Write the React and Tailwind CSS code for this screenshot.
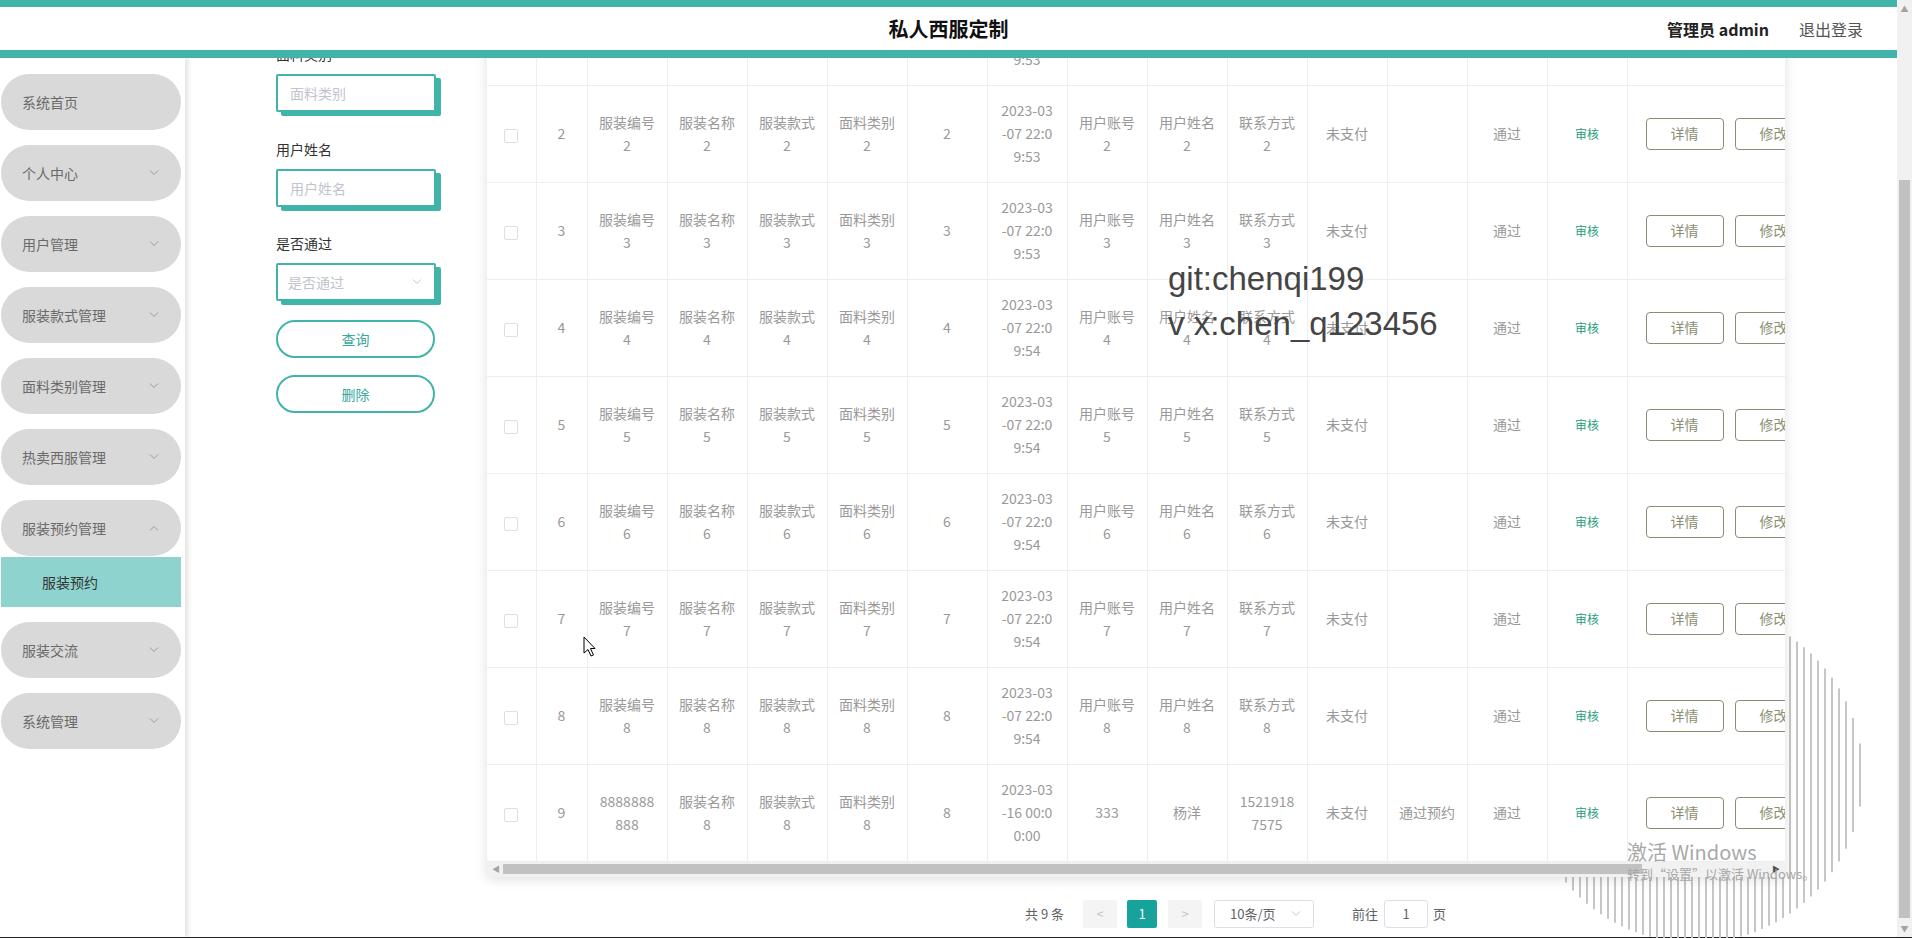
import React from "react";

const menu = [
  { label: "系统首页" },
  { label: "个人中心", arrow: "down" },
  { label: "用户管理", arrow: "down" },
  { label: "服装款式管理", arrow: "down" },
  { label: "面料类别管理", arrow: "down" },
  { label: "热卖西服管理", arrow: "down" },
  { label: "服装预约管理", arrow: "up", sub: "服装预约" },
  { label: "服装交流", arrow: "down" },
  { label: "系统管理", arrow: "down" },
];

const widths = ["w-[49px]", "w-[51px]", "w-[80px]", "w-[80px]", "w-[80px]", "w-[80px]", "w-[80px]", "w-[80px]", "w-[80px]", "w-[80px]", "w-[80px]", "w-[80px]", "w-[80px]", "w-[80px]", "w-[80px]", "w-[200px]"];

const rows = [];
for (let n = 1; n <= 8; n++) {
  rows.push({
    idx: String(n),
    text: [
      ["服装编号", String(n)],
      ["服装名称", String(n)],
      ["服装款式", String(n)],
      ["面料类别", String(n)],
      [String(n)],
      ["2023-03", "-07 22:0", n <= 3 ? "9:53" : "9:54"],
      ["用户账号", String(n)],
      ["用户姓名", String(n)],
      ["联系方式", String(n)],
      ["未支付"],
      [],
      ["通过"],
    ],
  });
}
rows.push({
  idx: "9",
  text: [
    ["8888888", "888"],
    ["服装名称", "8"],
    ["服装款式", "8"],
    ["面料类别", "8"],
    ["8"],
    ["2023-03", "-16 00:0", "0:00"],
    ["333"],
    ["杨洋"],
    ["1521918", "7575"],
    ["未支付"],
    ["通过预约"],
    ["通过"],
  ],
});

function Chevron({ up, color = "#9a9a9a" }) {
  return (
    <svg width="10" height="6" viewBox="0 0 10 6">
      <polyline points={up ? "1,5.5 5,1.5 9,5.5" : "1,0.5 5,4.5 9,0.5"} fill="none" stroke={color} strokeWidth="1" />
    </svg>
  );
}

function Field({ label }) {
  return (
    <input
      readOnly
      placeholder={label}
      className="mt-[10px] h-[38px] w-[160px] rounded-[2px] border-2 border-[#41b4a9] bg-white pl-[12px] text-[14px] shadow-[5px_4px_0_#41b4a9] outline-none placeholder:text-[#c0c4cc]"
    />
  );
}

function Decoration() {
  const lines = [];
  const r = 168;
  for (let x = 4; x < 2 * r; x += 7) {
    const dx = x - r;
    const h = Math.sqrt(r * r - dx * dx);
    lines.push(<line key={x} x1={x} x2={x} y1={r - h} y2={r + h} stroke="#c6c6c6" strokeWidth="2" />);
  }
  return (
    <svg width="336" height="336" viewBox="0 0 336 336" className="absolute left-[1527px] top-[607px] z-0">
      {lines}
    </svg>
  );
}

export default function App() {
  return (
    <div className="relative isolate flex h-[938px] w-[1912px] flex-col overflow-hidden bg-white font-['Noto_Sans_CJK_SC','Noto_Sans',sans-serif]">
      <div className="flex h-[937px]">
        <div className="flex w-[1897px] flex-col">
          {/* top bar */}
          <header className="relative z-30 grid h-[58px] grid-cols-[1fr_auto_1fr] items-center border-t-[7px] border-b-[8px] border-[#41b4a9] bg-white">
            <div />
            <div className="text-[20px] font-bold text-[#111]">私人西服定制</div>
            <div className="flex items-center justify-end gap-[30px] pr-[34px] text-[16px]">
              <span className="font-bold text-[#222]">管理员 admin</span>
              <span className="text-[#555]">退出登录</span>
            </div>
          </header>

          <div className="flex h-[879px] overflow-hidden">
            {/* sidebar */}
            <aside className="relative z-20 flex w-[185px] shrink-0 flex-col gap-[15px] bg-white pt-[16px] shadow-[3px_0_5px_rgba(0,0,0,0.12)]">
              {menu.map((m) => (
                <div key={m.label} className="flex flex-col">
                  <div className="ml-px flex h-[56px] w-[180px] items-center justify-between rounded-full bg-[#d9d9d9] pl-[21px] pr-[22px] text-[14px] text-[#6a6a6a]">
                    <span>{m.label}</span>
                    {m.arrow && <Chevron up={m.arrow === "up"} />}
                  </div>
                  {m.sub && (
                    <div className="ml-px mt-px flex h-[50px] w-[180px] items-center bg-[#8fd3ce] pl-[41px] text-[14px] text-[#333]">
                      {m.sub}
                    </div>
                  )}
                </div>
              ))}
            </aside>

            {/* main */}
            <main className="flex flex-1">
              {/* search form */}
              <div className="ml-[91px] mt-[-14px] flex w-[165px] shrink-0 flex-col text-[14px]">
                <div className="h-[20px] leading-[20px] text-[#333]">面料类别</div>
                <Field label="面料类别" />
                <div className="mt-[27px] h-[20px] leading-[20px] text-[#333]">用户姓名</div>
                <Field label="用户姓名" />
                <div className="mt-[26px] h-[20px] leading-[20px] text-[#333]">是否通过</div>
                <div className="mt-[10px] flex h-[38px] w-[160px] items-center justify-between rounded-[2px] border-2 border-[#41b4a9] bg-white pl-[10px] pr-[12px] text-[#c0c4cc] shadow-[5px_4px_0_#41b4a9]">
                  <span>是否通过</span>
                  <Chevron color="#c0c4cc" />
                </div>
                <button type="button" className="mt-[19px] h-[38px] w-[159px] rounded-full border-2 border-[#41b4a9] bg-white text-[14px] text-[#36a89c]">查询</button>
                <button type="button" className="mt-[17px] h-[38px] w-[159px] rounded-full border-2 border-[#41b4a9] bg-white text-[14px] text-[#36a89c]">删除</button>
              </div>

              {/* table + pager */}
              <div className="ml-[46px] mt-[-70px] flex flex-col">
                <div className="relative z-10 w-[1298px] overflow-hidden bg-white shadow-[0_2px_12px_0_rgba(0,0,0,0.13)]">
                  <table className="w-[1340px] table-fixed border-collapse">
                    <colgroup>
                      {widths.map((w, i) => (
                        <col key={i} className={w} />
                      ))}
                    </colgroup>
                    <tbody>
                      {rows.map((r) => (
                        <tr key={r.idx} className="h-[97px]">
                          <td className="border-r border-b border-[#ebeef5] text-center align-middle">
                            <span className="inline-block h-[14px] w-[14px] rounded-[2px] border border-[#dcdfe6] bg-white align-middle" />
                          </td>
                          <td className="border-r border-b border-[#ebeef5] text-center align-middle text-[14px] text-[#999]">{r.idx}</td>
                          {r.text.map((lines, i) => (
                            <td key={i} className="border-r border-b border-[#ebeef5] px-[8px] text-center align-middle text-[14px] leading-[23px] text-[#999]">
                              {lines.map((l, j) => (
                                <div key={j} className="whitespace-nowrap">{l}</div>
                              ))}
                            </td>
                          ))}
                          <td className="border-r border-b border-[#ebeef5] text-center align-middle text-[12px] text-[#2a9d7c]">审核</td>
                          <td className="border-b border-[#ebeef5] pl-[18px] align-middle">
                            <div className="flex gap-[11px]">
                              <span className="flex h-[32px] w-[78px] items-center justify-center rounded-[4px] border border-[#8c8c74] text-[14px] text-[#8a8f74]">详情</span>
                              <span className="flex h-[32px] w-[78px] items-center justify-center rounded-[4px] border border-[#8c8c74] text-[14px] text-[#8a8f74]">修改</span>
                            </div>
                          </td>
                        </tr>
                      ))}
                    </tbody>
                  </table>
                  {/* horizontal scrollbar */}
                  <div className="flex h-[15px] items-center bg-[#f1f1f1]">
                    <span className="ml-[5px] w-[8px] text-[8px] leading-none text-[#a3a3a3]">◀</span>
                    <div className="ml-[3px] h-[10px] w-[1139px] bg-[#c1c1c1]" />
                    <span className="ml-auto mr-[5px] text-[8px] leading-none text-[#505050]">▶</span>
                  </div>
                </div>

                {/* pagination */}
                <div className="ml-[538px] mt-[23px] flex h-[28px] items-center text-[13px] text-[#606266]">
                  <span className="w-[58px] whitespace-nowrap">共 9 条</span>
                  <span className="mr-[10px] flex h-[28px] w-[34px] items-center justify-center rounded-[2px] bg-[#f4f4f5] text-[#c0c4cc]">&lt;</span>
                  <span className="mr-[11px] flex h-[28px] w-[30px] items-center justify-center rounded-[2px] bg-[#17a39c] text-white">1</span>
                  <span className="mr-[12px] flex h-[28px] w-[34px] items-center justify-center rounded-[2px] bg-[#f4f4f5] text-[#c0c4cc]">&gt;</span>
                  <span className="flex h-[28px] w-[100px] items-center justify-between rounded-[3px] border border-[#dcdfe6] pl-[15px] pr-[12px]">
                    <span>10条/页</span>
                    <Chevron color="#c0c4cc" />
                  </span>
                  <span className="ml-[38px]">前往</span>
                  <span className="ml-[6px] flex h-[28px] w-[44px] items-center justify-center rounded-[3px] border border-[#dcdfe6]">1</span>
                  <span className="ml-[5px]">页</span>
                </div>
              </div>
            </main>
          </div>
        </div>

        {/* page scrollbar */}
        <div className="flex w-[15px] flex-col bg-[#f1f1f1]">
          <span className="flex h-[17px] items-center justify-center text-[8px] text-[#a3a3a3]">▲</span>
          <div className="mx-[2px] mt-[163px] h-[738px] bg-[#c1c1c1]" />
          <span className="mt-auto flex h-[17px] items-center justify-center text-[8px] text-[#a3a3a3]">▼</span>
        </div>
      </div>
      <div className="h-px bg-[#222]" />

      <Decoration />

      {/* overlay watermark */}
      <div className="absolute left-[1168px] top-[256px] z-20 font-['Liberation_Sans',sans-serif] text-[33px] leading-[45px] text-[#454545]">
        <div>git:chenqi199</div>
        <div>v x:chen_q123456</div>
      </div>

      {/* windows activation */}
      <div className="absolute left-[1627px] top-[839px] z-20 text-[#a8a8a8]">
        <div className="text-[20px] leading-[26px]">激活 Windows</div>
        <div className="text-[13px] leading-[18px]">转到“设置”以激活 Windows。</div>
      </div>

      {/* mouse pointer */}
      <svg width="14" height="22" viewBox="0 0 14 22" className="absolute left-[583px] top-[636px] z-30">
        <path d="M1 1 L1 17 L5 13.5 L8 20 L10.5 19 L7.5 12.5 L12 12.5 Z" fill="#fff" stroke="#000" strokeWidth="1" strokeLinejoin="round" />
      </svg>
    </div>
  );
}
